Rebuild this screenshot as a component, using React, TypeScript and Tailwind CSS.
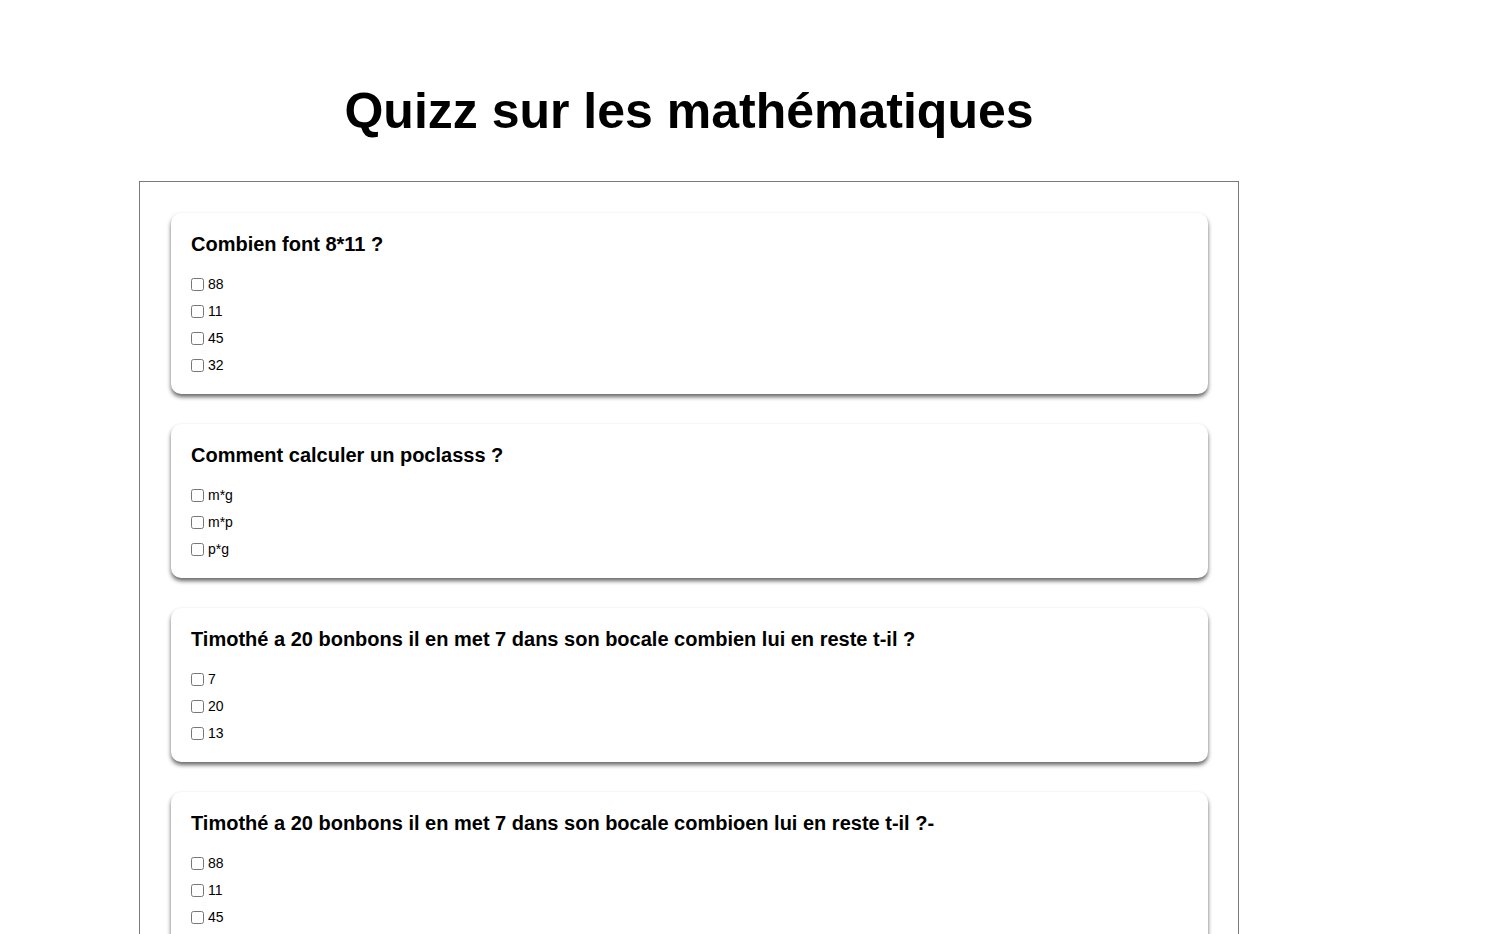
import React from "react";

const questions: { q: string; options: string[] }[] = [
  { q: "Combien font 8*11 ?", options: ["88", "11", "45", "32"] },
  { q: "Comment calculer un poclasss ?", options: ["m*g", "m*p", "p*g"] },
  {
    q: "Timothé a 20 bonbons il en met 7 dans son bocale combien lui en reste t-il ?",
    options: ["7", "20", "13"],
  },
  {
    q: "Timothé a 20 bonbons il en met 7 dans son bocale combioen lui en reste t-il ?-",
    options: ["88", "11", "45", "32"],
  },
];

export default function App() {
  return (
    <div
      className="min-h-screen bg-white text-black"
      style={{ fontFamily: '"Liberation Sans", Arial, sans-serif' }}
    >
      <div className="w-[1100px] ml-[139px]">
        <h1 className="pt-[82px] text-center text-[50px] leading-[58px] font-bold">
          Quizz sur les mathématiques
        </h1>
        <div className="mt-[41px] border border-[#7a7a7a] pt-[31px] pl-[31px] pr-[30px] pb-[30px] flex flex-col gap-[30px]">
          {questions.map((item, i) => (
            <div
              key={i}
              className="bg-white rounded-[10px] shadow-[0_3px_4px_rgba(0,0,0,0.6)] pt-[20px] px-[20px] pb-[15px]"
            >
              <h3 className="text-[20px] leading-[23px] font-bold">{item.q}</h3>
              <div className="mt-[15px] flex flex-col">
                {item.options.map((o, j) => (
                  <label key={j} className="h-[27px] flex items-center text-[14px]">
                    <input type="checkbox" className="m-0 mr-[4px] w-[13px] h-[13px]" />
                    <span>{o}</span>
                  </label>
                ))}
              </div>
            </div>
          ))}
        </div>
      </div>
    </div>
  );
}
